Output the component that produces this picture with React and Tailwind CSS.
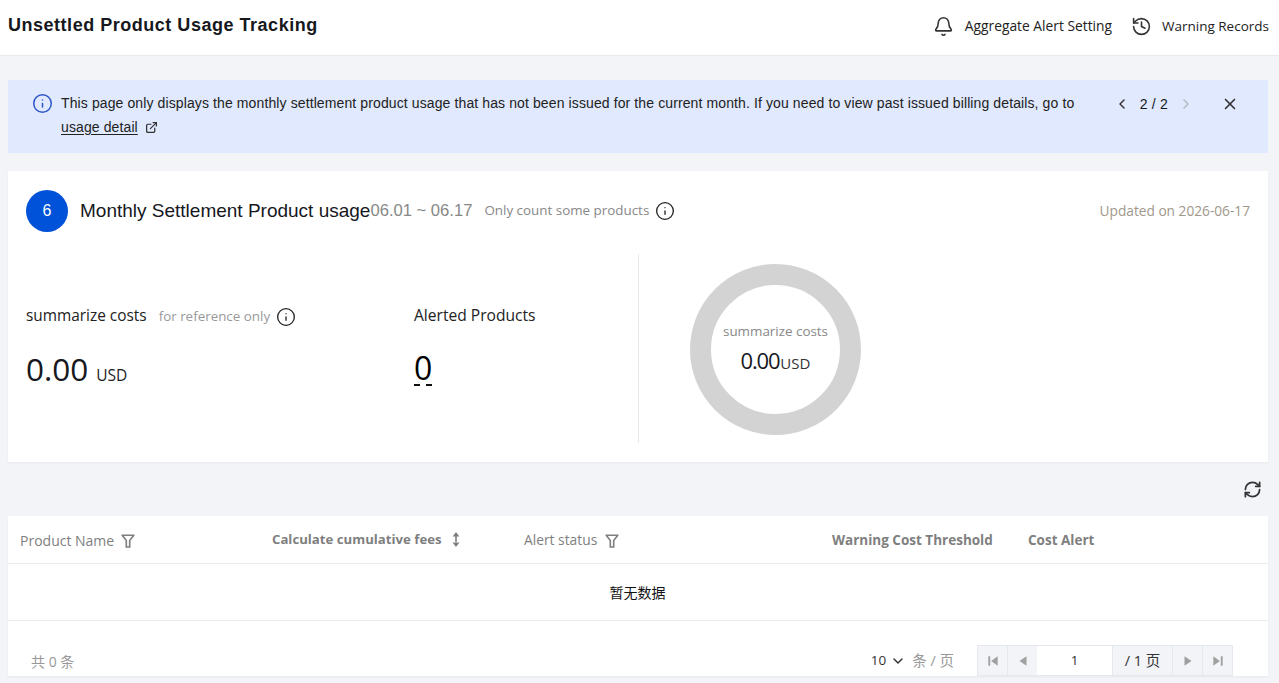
import React from 'react';
import { Bell, History, ChevronLeft, ChevronRight, X, Info, ExternalLink, RefreshCw, ChevronDown } from 'lucide-react';

const ui = "font-['Open_Sans','Noto_Sans_CJK_SC',sans-serif]";
const arial = "font-['Liberation_Sans','Noto_Sans_CJK_SC',sans-serif]";

const FilterIcon = () => (
  <svg width="14" height="14" viewBox="0 0 14 14" fill="none" stroke="#7f7f7f" strokeWidth="1.6">
    <path d="M0.5 1.2h13M1.4 1.4l3.9 5.2v6.4h3.4V6.6l3.9-5.2" />
  </svg>
);

const SortIcon = () => (
  <svg width="8" height="15" viewBox="0 0 8 15" fill="#7f7f7f">
    <path d="M4 0l3.4 4.4H.6zM4 15l3.4-4.4H.6zM3.2 4h1.6v7H3.2z" />
  </svg>
);

const PageBtn = ({ children, className = '' }) => (
  <div className={`h-[31px] flex items-center justify-center border-y border-l border-[#e5e8ef] bg-[#f2f4f8] ${className}`}>
    {children}
  </div>
);

const Arrow = ({ d }) => (
  <svg width="14" height="14" viewBox="0 0 12 12" fill="#a0a0a0"><path d={d} /></svg>
);

const App = () => {
  return (
    <div className={`h-[683px] overflow-hidden bg-[#f2f4f8] text-[#16181d] ${arial}`}>
      {/* header */}
      <header className="h-[56px] bg-white border-b border-[#e8e9ec] flex items-center justify-between pl-2 pr-[10px]">
        <h1 className="text-[18px] font-bold tracking-[0.52px] -mt-[4px] text-[#16181d]">Unsettled Product Usage Tracking</h1>
        <div className={`flex items-center text-[#222] -mt-[2px] ${ui}`}>
          <Bell size={21} strokeWidth={1.8} className="mr-[11px] -mt-[1px] text-[#333]" />
          <span className="mr-[19px] text-[13.8px]">Aggregate Alert Setting</span>
          <History size={21} strokeWidth={1.8} className="mr-[10px] -mt-[1px] text-[#333]" />
          <span className="text-[13.5px]">Warning Records</span>
        </div>
      </header>

      <div className="pl-2 pr-[11px] pt-[24px]">
        {/* notice */}
        <div className="h-[73px] bg-[#e0e9fd] flex pl-[24px] pt-[11px]">
          <Info size={21} strokeWidth={1.7} className="text-[#2c55c8] mt-[2px] shrink-0" />
          <div className="ml-[8px] w-[1040px] shrink-0 text-[14px] tracking-[0.11px] leading-[24px] text-[#222]">
            This page only displays the monthly settlement product usage that has not been issued for the current month. If you need to view past issued billing details, go to{' '}
            <span className="underline underline-offset-2">usage detail</span>
            <ExternalLink size={13} strokeWidth={2.3} className="inline ml-[7px] -mt-[1px] text-[#333]" />
          </div>
          <div className="ml-auto mr-[29px] flex items-center h-[24px] mt-[1px] text-[14px] tracking-[0.2px]">
            <ChevronLeft size={16} strokeWidth={2.2} className="text-[#333]" />
            <span className="mx-[10px]">2 / 2</span>
            <ChevronRight size={16} strokeWidth={2.2} className="text-[#b5b8c0]" />
            <X size={18} strokeWidth={2.2} className="ml-[27px] text-[#333]" />
          </div>
        </div>

        {/* summary card */}
        <section className="mt-[18px] h-[291px] bg-white shadow-[0_1px_2px_rgba(0,0,0,0.05)] flex flex-col">
          <div className="flex items-center pl-[18px] pr-[18px] pt-[19px]">
            <div className={`w-[42px] h-[42px] rounded-full bg-[#0052d9] text-white text-[16px] flex items-center justify-center ${arial}`}>6</div>
            <span className="ml-[12px] text-[19px] text-[#16181d]">Monthly Settlement Product usage</span>
            <span className="text-[16.6px] text-[#888]">06.01 ~ 06.17</span>
            <span className={`ml-[12px] text-[13.4px] -mt-[1px] text-[#888] ${ui}`}>Only count some products</span>
            <Info size={20} strokeWidth={1.6} className="ml-[6px] text-[#222]" />
            <span className={`ml-auto text-[13.7px] text-[#a0978b] ${ui}`}>Updated on 2026-06-17</span>
          </div>
          <div className={`flex mt-[22px] pl-[18px] ${ui}`}>
            <div className="w-[388px] pt-[50px]">
              <div className="flex items-center h-[24px]">
                <span className="text-[15.4px] text-[#222]">summarize costs</span>
                <span className="ml-[12px] mt-[1px] text-[13.4px] text-[#999]">for reference only</span>
                <Info size={20} strokeWidth={1.6} className="ml-[6px] mt-[1px] text-[#222]" />
              </div>
              <div className="mt-[19px] flex items-baseline">
                <span className="text-[31.5px] font-[520] leading-[44px] text-[#16181d]">0.00</span>
                <span className="ml-[8px] text-[15.5px] text-[#222]">USD</span>
              </div>
            </div>
            <div className="w-[224px] pt-[50px]">
              <div className="h-[24px] flex items-center text-[15.6px] text-[#222]">Alerted Products</div>
              <div className="mt-[20px]">
                <span className="text-[32px] font-[520] leading-[40px] text-black inline-block h-[38px] border-b-2 border-dashed border-[#111]">0</span>
              </div>
            </div>
            <div className="w-px h-[189px] bg-[#e8e9ec]" />
            <div className="ml-[51px] mt-[10px] w-[171px] h-[171px] rounded-full border-[21px] border-[#d3d3d3] flex flex-col items-center justify-center">
              <span className="text-[13.4px] text-[#888] -mt-[3px]">summarize costs</span>
              <div className="mt-[3px] flex items-baseline">
                <span className="text-[22px] tracking-[-1.2px] leading-[30px] text-[#16181d]">0.00</span>
                <span className="ml-[1px] text-[15px] text-[#333]">USD</span>
              </div>
            </div>
          </div>
        </section>

        {/* refresh */}
        <div className="h-[54px] flex items-center justify-end pr-[6px]">
          <RefreshCw size={19} strokeWidth={2.2} className="text-[#333]" />
        </div>

        {/* table */}
        <section className="h-[160px] bg-white shadow-[0_1px_2px_rgba(0,0,0,0.05)]">
          <div className={`h-[48px] border-b border-[#e8eaf0] flex items-center text-[#7f7f7f] ${ui}`}>
            <div className="w-[264px] pl-[12px] flex items-center gap-[7px] text-[14px] mt-[2px]"><span>Product Name</span><FilterIcon /></div>
            <div className="w-[252px] flex items-center gap-[10px] font-bold text-[13.2px] mt-[1px]"><span>Calculate cumulative fees</span><SortIcon /></div>
            <div className="w-[308px] flex items-center gap-[8px] text-[13.8px] mt-[2px]"><span>Alert status</span><FilterIcon /></div>
            <div className="w-[196px] font-bold text-[13.5px] mt-[1px]">Warning Cost Threshold</div>
            <div className="font-bold text-[13.5px] mt-[1px]">Cost Alert</div>
          </div>
          <div className="h-[57px] border-b border-[#e8eaf0] flex items-center justify-center text-[14px] text-[#111] pt-[2px] pr-[1px]">暂无数据</div>
          <div className="flex items-end h-[55px]">
            <span className={`ml-[23px] mb-[4px] text-[14px] text-[#999] ${ui}`}>共 0 条</span>
            <div className={`ml-auto flex items-center mr-[35px] ${ui}`}>
              <span className="text-[13.5px] text-[#333]">10</span>
              <ChevronDown size={16} strokeWidth={2.2} className="ml-[4px] text-[#333]" />
              <span className="ml-[6px] mr-[23px] text-[14.5px] text-[#999]">条 / 页</span>
              <PageBtn className="w-[30px]"><Arrow d="M2 2h1.6v8H2zM10 2v8L4.4 6z" /></PageBtn>
              <PageBtn className="w-[30px]"><Arrow d="M9 2v8L3 6z" /></PageBtn>
              <div className="w-[75px] h-[31px] bg-white border-y border-[#e5e8ef] flex items-center justify-center text-[13.5px] text-[#333]">1</div>
              <PageBtn className="w-[60px] text-[14.5px] text-[#333]">/ 1 页</PageBtn>
              <PageBtn className="w-[30px]"><Arrow d="M3 2v8l6-4z" /></PageBtn>
              <PageBtn className="w-[31px] border-r"><Arrow d="M2 2v8l5.6-4zM8.4 2H10v8H8.4z" /></PageBtn>
            </div>
          </div>
        </section>
      </div>
    </div>
  );
};

export default App;
